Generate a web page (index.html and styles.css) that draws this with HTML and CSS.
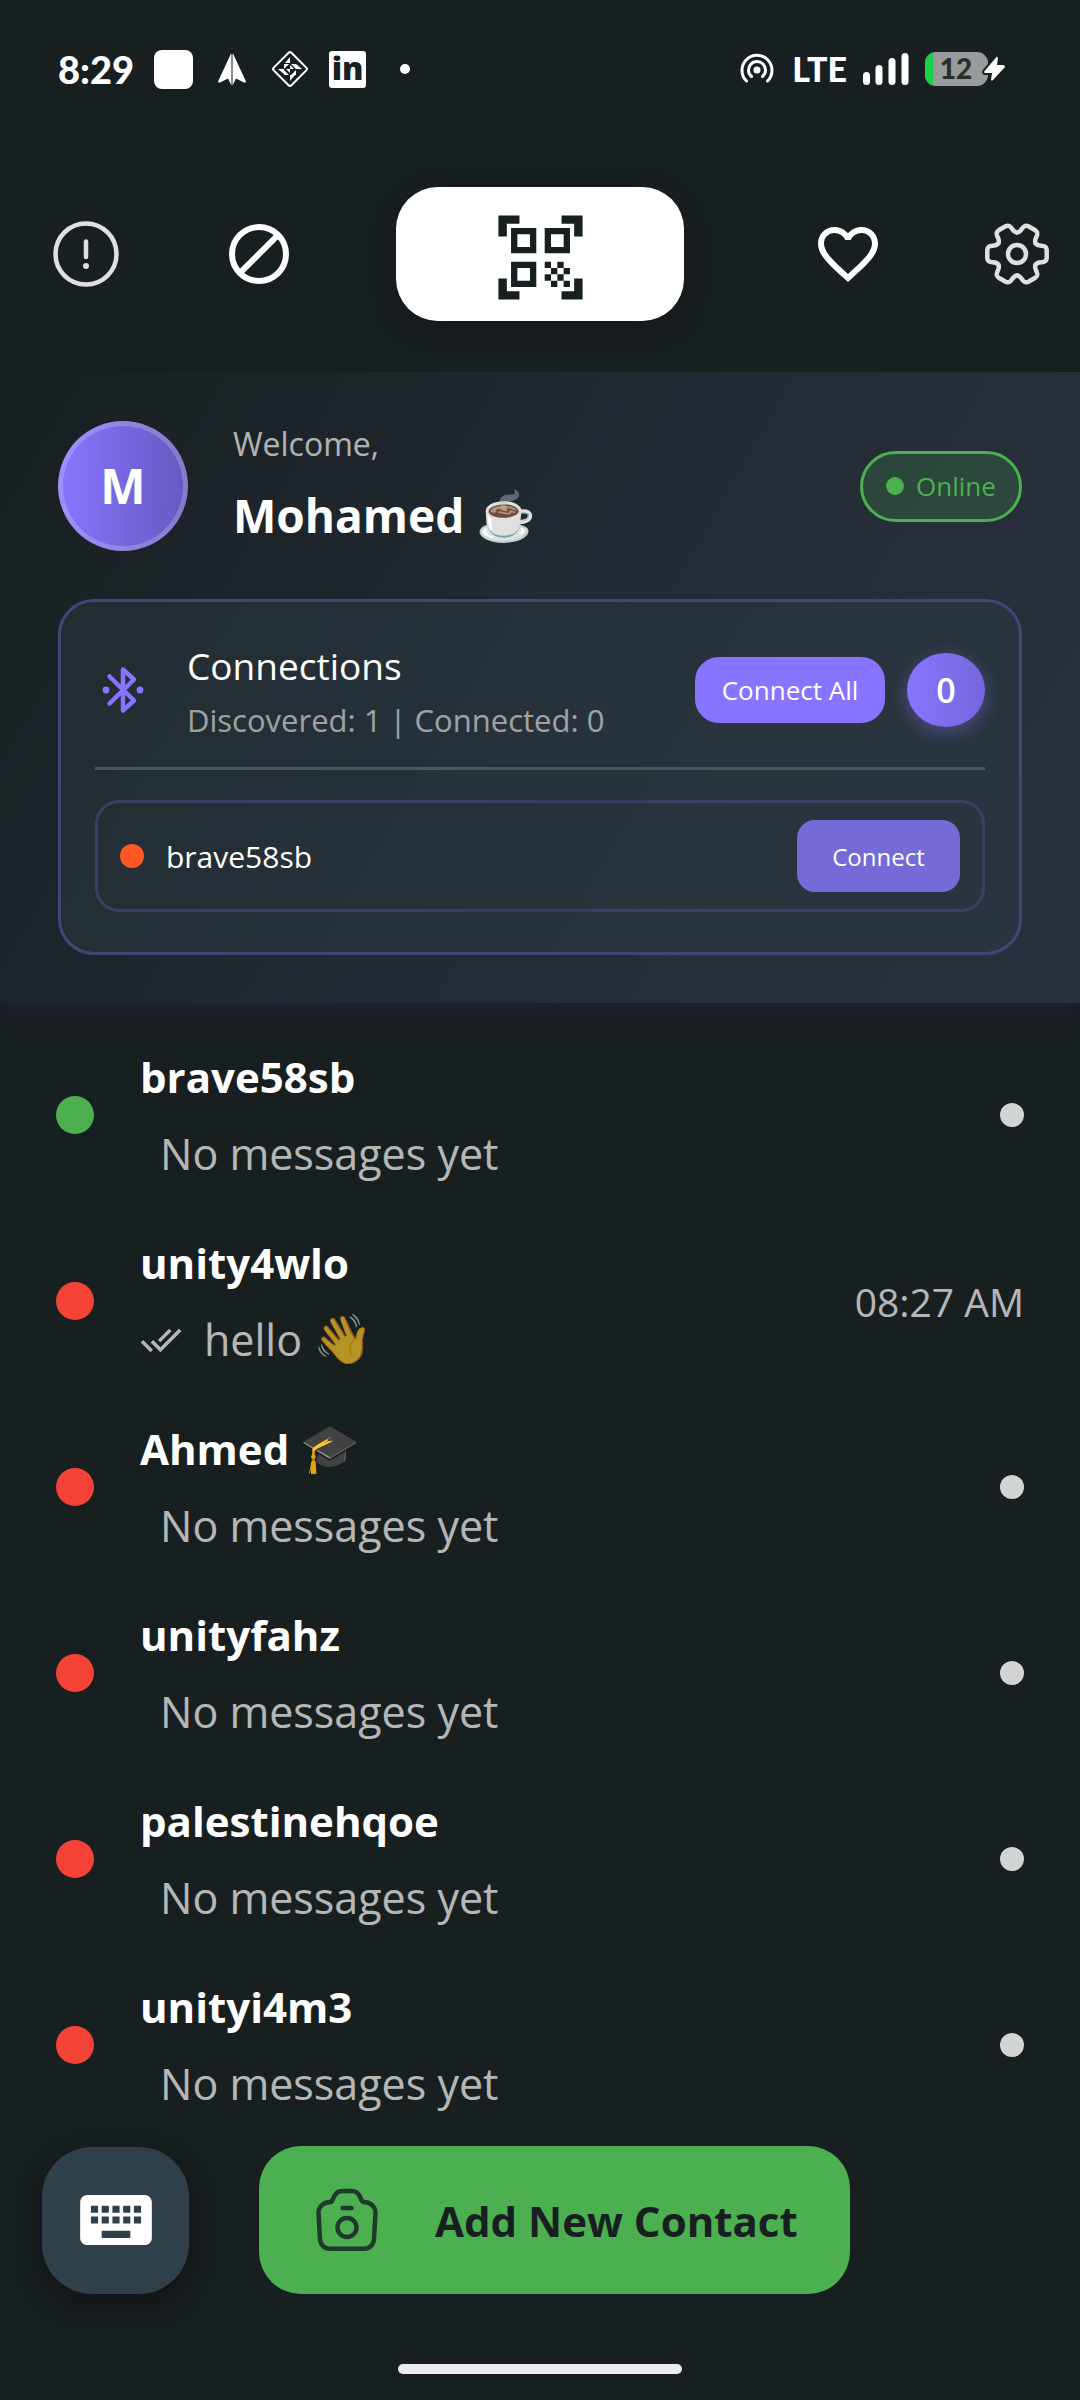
FILE: index.html
```html
<!DOCTYPE html>
<html lang="en">
<head>
<meta charset="utf-8">
<meta name="viewport" content="width=device-width, initial-scale=1">
<title>Contacts</title>
<link rel="stylesheet" href="styles.css">
</head>
<body>
<div class="status">
  <div class="status-left">
    <span class="clock">8:29</span>
    <span class="note-square"></span>
    <svg class="status-icon" viewBox="0 0 38 38"><path fill="#fff" d="M18 3.500 5 31.500q0 1.500 2 1l8-4 2 4 1 2zM20 3.500 33 31.500q0 1.500-2 1l-8-4-2 4-1 2z"/><path stroke="#fff" d="M19 4v31"/></svg>
    <svg class="status-icon" viewBox="0 0 38 38"><rect x="6.500" y="6.500" width="25" height="25" rx="2" fill="none" stroke="#fff" stroke-width="2" transform="rotate(45 19 19)"/><path fill="#fff" d="M19 7v6h-5zM31 19h-6v-5zM19 31v-6h5zM7 19h6v5zM13 14h5l-5 5zM25 14v5l-5-5zM13 25v-5l5 5zM25 25h-5l5-5zM19 19v-4l4 4zM19 19v4l-4-4z"/></svg>
    <span class="linkedin">in</span>
    <span class="more"><i class="more-dot"></i></span>
  </div>
  <div class="status-right">
    <svg class="status-icon" viewBox="0 0 38 38" fill="none" stroke="#fff" stroke-width="3" stroke-linecap="round"><path d="M8.500 31a15 15 0 1 1 21 0M13.500 26.500a8.500 8.500 0 1 1 11 0"/><circle cx="19" cy="20" r="3.500" fill="#fff" stroke="none"/></svg>
    <span class="lte">LTE</span>
    <svg class="signal" viewBox="0 0 46 32" fill="#fff"><rect y="19" width="7" height="13" rx="3.500"/><rect x="12.500" y="12" width="7" height="20" rx="3.500"/><rect x="25.500" y="5" width="7" height="27" rx="3.500"/><rect x="38.500" width="7" height="32" rx="3.500"/></svg>
    <svg class="battery" viewBox="0 0 82 34"><clipPath id="cell"><rect width="63" height="34" rx="11"/></clipPath><g clip-path="url(#cell)"><rect width="63" height="34" fill="#979b9b"/><rect width="8" height="34" fill="#1bd14b"/></g><text class="battery-text" x="31" y="27" text-anchor="middle">12</text><path d="M71.500 5 59.500 19q-1 2 1 2l6.500 0-1 7q1 1 2 0l12-13q0-2-2-2l-6 0 1-7q-1-2-2-1z" fill="#fff" stroke="#181f21" stroke-width="4" paint-order="stroke"/></svg>
  </div>
</div>

<nav class="toolbar" aria-label="Main">
  <div class="tools tools-left">
    <button class="tool" aria-label="Alerts"><svg viewBox="0 0 72 72" fill="none" stroke="#e0e0e0" stroke-width="4.500" stroke-linecap="round"><circle cx="36" cy="36" r="30.500"/><path d="M36 23.500v15.500"/><circle cx="36" cy="48" r="3" fill="#e0e0e0" stroke="none"/></svg></button>
    <button class="tool" aria-label="Blocked"><svg viewBox="0 0 24 24" fill="none" stroke="#fff" stroke-width="2"><circle cx="12" cy="12" r="9"/><path d="M5.600 18.400 18.400 5.600"/></svg></button>
  </div>
  <button class="scan" aria-label="Scan code"><svg viewBox="0 0 24 24" fill="#181f21"><path d="M9.500 6.500v3h-3v-3h3M11 5H5v6h6V5zm-1.500 9.500v3h-3v-3h3M11 13H5v6h6v-6zm6.500-6.500v3h-3v-3h3M19 5h-6v6h6V5zm-6 8h1.500v1.500H13V13zm1.500 1.500H16V16h-1.500v-1.500zM16 13h1.500v1.500H16V13zm-3 3h1.500v1.500H13V16zm1.500 1.500H16V19h-1.500v-1.500zM16 16h1.500v1.500H16V16zm1.500-1.500H19V16h-1.500v-1.500zm0 3H19V19h-1.500v-1.500zM22 7h-2V4h-3V2h5v5zm0 15v-5h-2v3h-3v2h5zM2 22h5v-2H4v-3H2v5zM2 2v5h2V4h3V2H2z"/></svg></button>
  <div class="tools tools-right">
    <button class="tool" aria-label="Favourites"><svg viewBox="0 0 24 24" fill="#fff"><path d="M16.500 3c-1.740 0-3.410.81-4.500 2.090C10.910 3.810 9.240 3 7.500 3 4.420 3 2 5.420 2 8.500c0 3.780 3.400 6.860 8.550 11.540L12 21.350l1.450-1.320C18.600 15.360 22 12.280 22 8.500 22 5.420 19.580 3 16.500 3zm-4.400 15.550l-.1.100-.1-.1C7.140 14.240 4 11.390 4 8.500 4 6.500 5.500 5 7.500 5c1.540 0 3.040.99 3.570 2.360h1.870C13.460 5.990 14.960 5 16.500 5c2 0 3.500 1.500 3.500 3.500 0 2.890-3.140 5.740-7.900 10.050z"/></svg></button>
    <button class="tool" aria-label="Settings"><svg viewBox="-36 -36 72 72" fill="none" stroke="#e0e0e0" stroke-width="4.500" stroke-linecap="round"><defs><path id="tooth" d="M18.600-10.700C21.500-6 29.300-11 29.700-4V4C29.300 11 21.500 6 18.600 10.700"/></defs><use href="#tooth"/><use href="#tooth" transform="rotate(60)"/><use href="#tooth" transform="rotate(120)"/><use href="#tooth" transform="rotate(180)"/><use href="#tooth" transform="rotate(240)"/><use href="#tooth" transform="rotate(300)"/><circle r="9"/></svg></button>
  </div>
</nav>

<header class="panel">
  <div class="profile">
    <div class="avatar">M</div>
    <div class="greeting">
      <span class="welcome">Welcome,</span>
      <h1 class="user">Mohamed <span class="emoji">☕</span></h1>
    </div>
    <span class="online"><i class="online-dot"></i>Online</span>
  </div>
  <section class="card">
    <div class="card-head">
      <svg class="bluetooth" viewBox="0 0 56 56" fill="none" stroke="#8875ff" stroke-width="4.500" stroke-linecap="round" stroke-linejoin="round"><path d="M14.500 14.500 39 38.500 28 48.500V7.500L39 17.500 14.500 41.500"/><circle cx="11" cy="28" r="3.400" fill="#8875ff" stroke="none"/><circle cx="45" cy="28" r="3.400" fill="#8875ff" stroke="none"/></svg>
      <div class="card-title">
        <h2 class="title">Connections</h2>
        <p class="counts">Discovered: 1 | Connected: 0</p>
      </div>
      <button class="connect-all">Connect All</button>
      <span class="count">0</span>
    </div>
    <div class="device">
      <i class="device-dot"></i>
      <span class="device-name">brave58sb</span>
      <button class="connect">Connect</button>
    </div>
  </section>
</header>

<ul class="list">
  <li class="row"><i class="presence on"></i><div class="body"><h3 class="name">brave58sb</h3><p class="message">No messages yet</p></div><i class="idle"></i></li>
  <li class="row"><i class="presence"></i><div class="body"><h3 class="name">unity4wlo</h3><p class="message sent"><svg class="checks" viewBox="0 0 24 24" fill="#fff"><path d="M18 7l-1.410-1.410-6.340 6.340 1.410 1.410L18 7zm4.240-1.410L11.660 16.170 7.480 12l-1.410 1.410L11.660 19l12-12-1.420-1.410zM.41 13.410L6 19l1.410-1.410L1.830 12 .41 13.410z"/></svg><span>hello <span class="emoji">👋</span></span></p></div><time class="time">08:27 AM</time></li>
  <li class="row"><i class="presence"></i><div class="body"><h3 class="name">Ahmed <span class="emoji">🎓</span></h3><p class="message">No messages yet</p></div><i class="idle"></i></li>
  <li class="row"><i class="presence"></i><div class="body"><h3 class="name">unityfahz</h3><p class="message">No messages yet</p></div><i class="idle"></i></li>
  <li class="row"><i class="presence"></i><div class="body"><h3 class="name">palestinehqoe</h3><p class="message">No messages yet</p></div><i class="idle"></i></li>
  <li class="row"><i class="presence"></i><div class="body"><h3 class="name">unityi4m3</h3><p class="message">No messages yet</p></div><i class="idle"></i></li>
</ul>

<footer class="actions">
  <button class="keyboard" aria-label="Keyboard"><svg viewBox="0 0 24 24" fill="#fff"><path d="M20 5H4c-1.100 0-1.990.9-1.990 2L2 17c0 1.100.9 2 2 2h16c1.100 0 2-.9 2-2V7c0-1.100-.9-2-2-2zm-9 3h2v2h-2V8zm0 3h2v2h-2v-2zM8 8h2v2H8V8zm0 3h2v2H8v-2zm-1 2H5v-2h2v2zm0-3H5V8h2v2zm9 7H8v-2h8v2zm0-4h-2v-2h2v2zm0-3h-2V8h2v2zm3 3h-2v-2h2v2zm0-3h-2V8h2v2z"/></svg></button>
  <button class="add"><svg viewBox="0 0 72 72" fill="none" stroke="#1f3a2a" stroke-width="4.500" stroke-linecap="round"><path d="M31 7h10c5 0 7 3 8.500 7 1 3 2.500 4.300 4.500 4.300 6 .2 10.500 4.700 10.500 10.700L63 55c-.5 6-4.500 9.700-10 9.700H19c-5.500 0-9.500-3.700-10-9.700L7.500 29c0-6 4.500-10.500 10.500-10.700 2 0 3.500-1.300 4.500-4.300C24 10 26 7 31 7zM31.500 24h9"/><circle cx="36" cy="43.500" r="9.500"/></svg>Add New Contact</button>
</footer>
<div class="home"></div>
</body>
</html>
```

FILE: styles.css
```css
* {
  box-sizing: border-box;
}

body {
  margin: 0;
  min-height: 100vh;
  display: flex;
  flex-direction: column;
  background: #181f21;
  color: #fff;
  font-family: "Open Sans", "Noto Sans", sans-serif;
  font-weight: 400;
}

h1, h2, h3, p, ul {
  margin: 0;
  padding: 0;
}

svg {
  display: block;
  flex: none;
}

button {
  margin: 0;
  padding: 0;
  border: 0;
  background: none;
  color: inherit;
  font: inherit;
}

i {
  display: block;
  flex: none;
  border-radius: 50%;
}

.emoji {
  font-family: "Noto Color Emoji", sans-serif;
  font-size: 48px;
  font-weight: 400;
  line-height: 48px;
}

/* Status bar */
.status {
  height: 138px;
  padding: 0 73px 0 58px;
  display: flex;
  align-items: center;
  justify-content: space-between;
}

.status-left {
  display: flex;
  align-items: center;
  gap: 20px;
}

.status-right {
  display: flex;
  align-items: center;
  gap: 16px;
}

.clock {
  font: 900 38px/38px Lato, sans-serif;
}

.note-square {
  width: 39px;
  height: 39px;
  border-radius: 8px;
  background: #fff;
}

.status-icon {
  width: 38px;
  height: 38px;
}

.linkedin {
  width: 37px;
  height: 37px;
  border-radius: 3px;
  background: #fff;
  color: #181f21;
  font-size: 32px;
  font-weight: 800;
  line-height: 33px;
  text-align: center;
}

.more {
  width: 38px;
  display: flex;
  justify-content: center;
}

.more-dot {
  width: 10px;
  height: 10px;
  background: #fff;
}

.lte {
  font: 900 34px/34px Lato, sans-serif;
}

.signal {
  width: 46px;
  height: 32px;
}

.battery {
  width: 82px;
  height: 34px;
}

.battery-text {
  fill: #2b2d2d;
  font: 900 28px Lato, sans-serif;
}

/* Toolbar */
.toolbar {
  display: grid;
  grid-template-columns: 1fr 288px 1fr;
  align-items: center;
  padding: 49px 0 51px;
}

.tools {
  display: flex;
  justify-content: space-between;
}

.tools-left {
  padding: 0 101px 0 50px;
}

.tools-right {
  padding: 0 27px 0 128px;
}

.tool svg {
  width: 72px;
  height: 72px;
}

.scan {
  height: 134px;
  padding-top: 6px;
  display: flex;
  align-items: center;
  justify-content: center;
  border-radius: 42px;
  background: #fff;
  box-shadow: 0 8px 24px rgba(24, 24, 27, 0.8);
}

.scan svg {
  width: 101px;
  height: 101px;
}

/* Profile panel */
.panel {
  padding: 49px 58px 48px;
  display: flex;
  flex-direction: column;
  gap: 48px;
  background: linear-gradient(120deg, #181f21, #202830 40%, #252e38 70%, #28303e);
  box-shadow: 0 12px 24px #1f2230;
  clip-path: inset(0 0 -40px 0);
}

.profile {
  height: 130px;
  display: flex;
  align-items: center;
}

.avatar {
  width: 130px;
  height: 130px;
  border: 5px solid rgba(255, 255, 255, 0.2);
  border-radius: 50%;
  background: linear-gradient(90deg, #8875ff, #6759c0) border-box;
  font-size: 48px;
  font-weight: 700;
  line-height: 120px;
  text-align: center;
}

.greeting {
  flex: 1;
  margin-left: 45px;
}

.welcome {
  display: block;
  font-size: 32px;
  line-height: 58px;
  opacity: 0.65;
}

.user {
  font-size: 46px;
  font-weight: 700;
  line-height: 84px;
}

.online {
  width: 162px;
  height: 71px;
  display: flex;
  align-items: center;
  justify-content: center;
  gap: 12px;
  border: 3px solid #4caf50;
  border-radius: 36px;
  background: rgba(76, 175, 80, 0.2);
  color: #4caf50;
  font-size: 26px;
}

.online-dot {
  width: 18px;
  height: 18px;
  background: #4caf50;
}

.card {
  padding: 34px;
  padding-bottom: 40px;
  border: 3px solid #434579;
  border-radius: 36px;
  background: rgba(48, 64, 72, 0.35);
}

.card-head {
  padding-bottom: 23px;
  display: flex;
  align-items: center;
  border-bottom: 3px solid #4a555b;
}

.bluetooth {
  width: 56px;
  height: 56px;
}

.card-title {
  flex: 1;
  margin-left: 36px;
}

.title {
  font-size: 37px;
  font-weight: 400;
  line-height: 60px;
}

.counts {
  font-size: 31px;
  line-height: 48px;
  opacity: 0.55;
}

.connect-all {
  width: 190px;
  height: 66px;
  margin-right: 22px;
  border-radius: 24px;
  background: #8875ff;
  font-size: 26px;
}

.count {
  width: 78px;
  height: 74px;
  border-radius: 50%;
  background: linear-gradient(90deg, #8875ff, #7467dc);
  box-shadow: 0 5px 18px rgba(136, 117, 255, 0.4);
  font-size: 34px;
  font-weight: 600;
  line-height: 74px;
  text-align: center;
}

.device {
  margin-top: 30px;
  padding: 17px 22px;
  display: flex;
  align-items: center;
  border: 3px solid #3b4062;
  border-radius: 24px;
}

.device-dot {
  width: 24px;
  height: 24px;
  background: #ff5722;
}

.device-name {
  flex: 1;
  margin-left: 22px;
  font-size: 30px;
}

.connect {
  width: 163px;
  height: 72px;
  border-radius: 18px;
  background: #766ad8;
  font-size: 24px;
}

/* Contact list */
.list {
  padding: 19px 56px 0;
  list-style: none;
}

.row {
  height: 186px;
  display: flex;
  align-items: center;
}

.presence {
  width: 38px;
  height: 38px;
  background: #f44336;
}

.presence.on {
  background: #4caf50;
}

.body {
  flex: 1;
  margin-left: 46px;
}

.name {
  font-size: 42px;
  font-weight: 700;
  line-height: 77px;
}

.message {
  height: 77px;
  padding-left: 20px;
  font-size: 43px;
  line-height: 77px;
  opacity: 0.68;
}

.message.sent {
  padding-left: 0;
  display: flex;
  align-items: center;
  gap: 22px;
}

.checks {
  width: 42px;
  height: 42px;
}

.time {
  font-size: 39px;
  opacity: 0.68;
}

.idle {
  width: 24px;
  height: 24px;
  background: #d1d4d3;
}

/* Bottom actions */
.actions {
  margin-top: auto;
  padding: 0 42px;
  display: flex;
  align-items: center;
  gap: 70px;
}

.keyboard {
  width: 147px;
  height: 147px;
  display: flex;
  align-items: center;
  justify-content: center;
  border-radius: 50px;
  background: #30404b;
  box-shadow: 0 10px 26px rgba(12, 12, 10, 0.6);
}

.keyboard svg {
  width: 86px;
  height: 86px;
}

.add {
  height: 148px;
  padding: 0 52px;
  display: flex;
  align-items: center;
  gap: 52px;
  border-radius: 42px;
  background: #4caf50;
  color: #181f21;
  font-size: 42px;
  font-weight: 700;
}

.add svg {
  width: 72px;
  height: 72px;
}

.home {
  width: 284px;
  height: 10px;
  margin: 70px auto 26px;
  border-radius: 5px;
  background: #ececec;
}
```
